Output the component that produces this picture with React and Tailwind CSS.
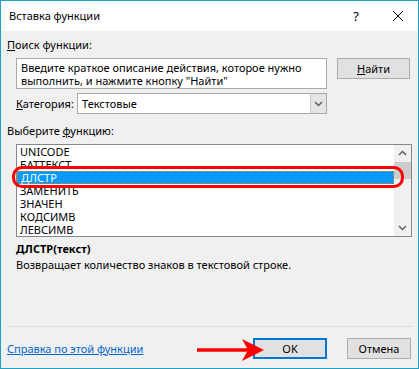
// Excel "Insert Function" dialog (Вставка функции) with a red annotation.

const items = ['UNICODE', 'БАТТЕКСТ', 'ДЛСТР', 'ЗАМЕНИТЬ', 'ЗНАЧЕН', 'КОДСИМВ', 'ЛЕВСИМВ']

function Chevron({ up = false }) {
  return (
    <svg width="9" height="6" viewBox="0 0 9 6" className="block">
      <path
        d={up ? 'M1 5 L4.5 1.5 L8 5' : 'M1 1 L4.5 4.5 L8 1'}
        fill="none"
        stroke="#606060"
        strokeWidth="1.5"
      />
    </svg>
  )
}

export default function App() {
  return (
    <div
      className="relative w-[419px] h-[369px] border border-[#1ba1c5] bg-[#f0f0f0] flex flex-col text-[11px] text-black leading-[16px]"
      style={{ fontFamily: '"Segoe UI", "Noto Sans", sans-serif' }}
    >
      {/* Title bar */}
      <div className="h-[30px] bg-white flex items-center pl-[8px] shrink-0">
        <span className="text-[11px]">Вставка функции</span>
        <span className="ml-auto mr-[33px] text-[13px]">?</span>
        <svg width="12" height="12" viewBox="0 0 12 12" className="mr-[14px]">
          <path d="M1 1 L11 11 M11 1 L1 11" stroke="#000" strokeWidth="1" />
        </svg>
      </div>

      <div className="flex flex-col px-[6px]">
        <div className="mt-[6px]">
          <span className="underline">П</span>оиск функции:
        </div>

        {/* Search row */}
        <div className="flex items-start mt-[5px] pl-[9px]">
          <div className="w-[311px] h-[31px] bg-white border border-[#a9a9a9] px-[4px] pt-[2px] leading-[13px]">
            Введите краткое описание действия, которое нужно выполнить, и нажмите кнопку "Найти"
          </div>
          <button className="ml-[10px] w-[73px] h-[21px] bg-[#e1e1e1] border border-[#adadad] flex items-center justify-center">
            <span><span className="underline">Н</span>айти</span>
          </button>
        </div>

        {/* Category row */}
        <div className="flex items-center mt-[4px] pl-[9px]">
          <span className="w-[61px]">
            <span className="underline">К</span>атегория:
          </span>
          <div className="w-[250px] h-[21px] bg-white border border-[#a9a9a9] flex items-center pl-[4px]">
            <span>Текстовые</span>
            <div className="ml-auto w-[16px] h-full bg-[#e5e5e5] border-l border-[#c8c8c8] flex items-center justify-center">
              <Chevron />
            </div>
          </div>
        </div>

        <div className="mt-[9px]">
          Выберите <span className="underline">ф</span>ункцию:
        </div>

        {/* Function list */}
        <div className="relative mt-[5px] ml-[9px] w-[396px] h-[93px] bg-white border border-[#828790] flex">
          <div className="flex-1 flex flex-col leading-[13px]">
            {items.map((name, i) => (
              <div
                key={name}
                className={`h-[13px] pl-[3px] ${
                  i === 2
                    ? 'bg-[#0099ff] text-white border border-dotted border-[#c88a3a] leading-[11px]'
                    : ''
                }`}
              >
                {name}
              </div>
            ))}
          </div>
          <div className="w-[17px] bg-[#f0f0f0] flex flex-col items-center">
            <div className="h-[16px] flex items-center justify-center">
              <Chevron up />
            </div>
            <div className="w-full h-[17px] mt-[1px] bg-[#cdcdcd]" />
            <div className="mt-auto h-[16px] flex items-center justify-center">
              <Chevron />
            </div>
          </div>
          {/* Red highlight */}
          <div className="absolute left-[-5px] top-[21px] w-[392px] h-[22px] border-[3px] border-[#ff0000] rounded-[10px]" />
        </div>

        <div className="mt-[4px] ml-[9px] font-bold">ДЛСТР(текст)</div>
        <div className="ml-[9px]">Возвращает количество знаков в текстовой строке.</div>

        <div className="mt-[53px] h-px bg-[#dcdcdc]" />

        {/* Footer */}
        <div className="flex items-center mt-[11px]">
          <span className="text-[#0066cc] underline">Справка по этой функции</span>
          <button className="ml-auto w-[74px] h-[21px] bg-[#e1e1e1] border-2 border-[#0078d7] flex items-center justify-center">
            OK
          </button>
          <button className="ml-[20px] w-[64px] h-[21px] bg-[#e1e1e1] border border-[#adadad] flex items-center justify-center mr-[1px]">
            Отмена
          </button>
        </div>
      </div>

      {/* Red arrow */}
      <svg width="72" height="26" viewBox="0 0 72 26" className="absolute left-[194px] top-[336px]">
        <path d="M2 13 L54 13" stroke="#ff0000" strokeWidth="3.5" />
        <polygon points="47,2 69,13 47,24 53,13" fill="#ff0000" />
      </svg>
    </div>
  )
}
